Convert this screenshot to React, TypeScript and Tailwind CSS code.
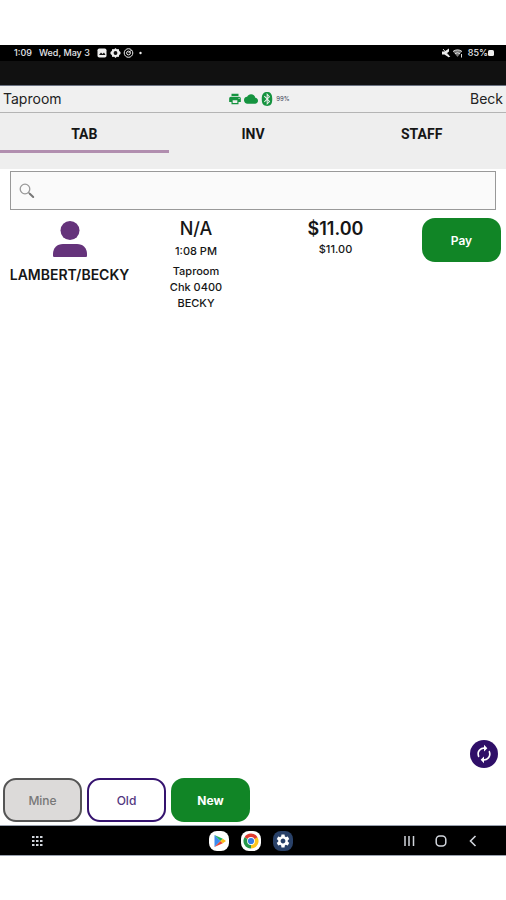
import clsx from "clsx";
import { useState } from "react";
import { FaBluetooth } from "react-icons/fa";
import { MdAutorenew, MdCloud, MdPrint, MdSettings } from "react-icons/md";

const tabs = ["TAB", "INV", "STAFF"];

const checks = [
  {
    id: 400,
    customer: "LAMBERT/BECKY",
    table: "N/A",
    time: "1:08 PM",
    area: "Taproom",
    check: "Chk 0400",
    server: "BECKY",
    total: "$11.00",
    due: "$11.00",
  },
];

function PersonIcon() {
  return (
    <svg viewBox="0 0 34 36" className="h-9 w-[34px] fill-[#65337b]" aria-hidden="true">
      <circle cx="17" cy="9.5" r="9.5" />
      <path d="M0 34.500V33c0-6 4-10 10-10h14c6 0 10 4 10 10v1.500c0 1-.5 1.500-1.500 1.500h-31C.5 36 0 35.500 0 34.500z" />
    </svg>
  );
}

function SearchIcon() {
  return (
    <svg viewBox="0 0 16 16" className="size-4 shrink-0" fill="none" aria-hidden="true">
      <circle cx="6" cy="6" r="4.800" stroke="#999" strokeWidth="1.300" />
      <path d="M9.500 9.500l1.500 1.500" stroke="#888" strokeWidth="1.300" />
      <path d="M10.800 10.800l3.400 3.200" stroke="#777" strokeWidth="2" strokeLinecap="round" />
    </svg>
  );
}

function StatusBar() {
  return (
    <div className="flex h-4 shrink-0 items-center justify-between bg-black pr-3 pl-3.5 text-[9px] font-medium text-gray-200">
      <div className="flex items-center gap-[7px]">
        <span>1:09</span>
        <span>Wed, May 3</span>
        <svg viewBox="0 0 46 10" className="h-2.5 w-[46px]" aria-hidden="true">
          <rect x="0.500" y="0.500" width="9" height="9" rx="1.800" fill="#eee" />
          <path d="M2 7l2-2.500 1.500 1.500L7 4.500 8.500 7z" fill="#111" />
          <path
            d="M18.500 0l1.300 1.200 1.900-.2.500 1.900L23.500 4v2l-1.300 1.100-.5 1.900-1.900-.2-1.300 1.200-1.300-1.200-1.900.2-.5-1.900L13.500 6V4l1.300-1.100.5-1.900 1.900.2z"
            fill="#eee"
          />
          <circle cx="18.500" cy="5" r="1.900" fill="#111" />
          <circle cx="31.500" cy="5" r="4.300" fill="none" stroke="#eee" />
          <circle cx="31.500" cy="5" r="1.900" fill="none" stroke="#eee" />
          <path d="M31.500 5l3-3" stroke="#eee" />
          <circle cx="43.500" cy="5" r="1.200" fill="#eee" />
        </svg>
      </div>
      <div className="flex items-center gap-1">
        <svg viewBox="0 0 22 10" className="h-2.5 w-[22px]" aria-hidden="true">
          <path d="M0 3.500h2.500L7 0.500v3L4.500 5.500 7 7.500v2L2.500 6.500H0z" fill="#eee" />
          <path d="M1 1l7 8" stroke="#eee" strokeWidth="0.900" />
          <path d="M11 3.500a7 7 0 0 1 9 0L15.500 9z" fill="#777" />
          <path d="M11 3.500a7 7 0 0 1 9 0M13 5.700a4 4 0 0 1 5 0" fill="none" stroke="#ddd" />
          <path d="M19.500 6v3.500" stroke="#ddd" />
        </svg>
        <span className="flex items-center">
          85%
          <svg viewBox="0 0 6 8" className="h-2 w-1.5" aria-hidden="true">
            <rect y="1" width="6" height="6" rx="1.500" fill="#eee" />
          </svg>
        </span>
      </div>
    </div>
  );
}

function Header() {
  return (
    <header className="grid h-7 shrink-0 grid-cols-3 items-center border-t border-b border-t-gray-500 border-b-[#b4b4b4] bg-[#f0f0f0] px-[3px] text-sm text-[#222]">
      <span>Taproom</span>
      <div className="flex items-center justify-center gap-0.5 pl-3 text-[#15933f]">
        <MdPrint className="size-[14px]" />
        <MdCloud className="size-[14px]" />
        <FaBluetooth className="size-[14px]" />
        <span className="text-[6px] text-gray-700">99%</span>
      </div>
      <span className="text-right">Beck</span>
    </header>
  );
}

function Play() {
  return (
    <svg viewBox="0 0 20 20" className="size-5" aria-hidden="true">
      <rect width="20" height="20" rx="8" fill="#fff" />
      <path d="M5.500 4v12l6-6z" fill="#3b8cf0" />
      <path d="M5.500 4l6 6 2.300-2.200z" fill="#20b15a" />
      <path d="M5.500 16l6-6 2.300 2.200z" fill="#e94235" />
      <path d="M13.800 7.800L11.500 10l2.300 2.200L17 10z" fill="#f9bc15" />
    </svg>
  );
}

function Chrome() {
  return (
    <svg viewBox="0 0 20 20" className="size-5" aria-hidden="true">
      <rect width="20" height="20" rx="8" fill="#fff" />
      <path d="M10 10L3.500 6.250a7.500 7.500 0 0 1 13 0z" fill="#df3b30" />
      <path d="M10 10l6.500-3.750A7.500 7.500 0 0 1 10 17.500z" fill="#fbc51d" />
      <path d="M10 10v7.500A7.500 7.500 0 0 1 3.500 6.250z" fill="#26984b" />
      <path d="M10 6.250h6.500L10 10z" fill="#df3b30" />
      <circle cx="10" cy="10" r="3.900" fill="#fff" />
      <circle cx="10" cy="10" r="3.100" fill="#347ce4" />
    </svg>
  );
}

function NavBar() {
  return (
    <nav className="grid h-[31px] shrink-0 grid-cols-3 items-center border-t border-b border-gray-400 bg-black text-gray-300">
      <button type="button" aria-label="All apps" className="ml-[31px] w-3">
        <svg viewBox="0 0 12 12" className="size-3" fill="currentColor" aria-hidden="true">
          {[1, 5, 9].map((x) =>
            [2, 6, 10].map((y) => <rect key={`${x}-${y}`} x={x} y={y - 1} width="2.500" height="2" />),
          )}
        </svg>
      </button>
      <div className="flex justify-center gap-3 pr-1">
        <button type="button" aria-label="Play Store">
          <Play />
        </button>
        <button type="button" aria-label="Chrome">
          <Chrome />
        </button>
        <button
          type="button"
          aria-label="Settings"
          className="flex size-5 items-center justify-center rounded-lg bg-[#294168]"
        >
          <MdSettings className="size-4 text-white" />
        </button>
      </div>
      <div className="flex justify-end gap-5 pr-[27px]">
        <button type="button" aria-label="Recents">
          <svg viewBox="0 0 12 12" className="size-3" stroke="currentColor" strokeWidth="1.500" aria-hidden="true">
            <path d="M2 1v10M6 1v10M10.500 1v10" />
          </svg>
        </button>
        <button type="button" aria-label="Home">
          <svg viewBox="0 0 12 12" className="size-3" fill="none" stroke="currentColor" strokeWidth="1.500" aria-hidden="true">
            <rect x="1.200" y="1" width="9.600" height="10" rx="3.500" />
          </svg>
        </button>
        <button type="button" aria-label="Back">
          <svg viewBox="0 0 12 12" className="size-3" fill="none" stroke="currentColor" strokeWidth="1.600" aria-hidden="true">
            <path d="M8.500 1l-5 5 5 5" />
          </svg>
        </button>
      </div>
    </nav>
  );
}

const actionStyle = "h-11 w-[79px] rounded-[13px] pt-0.5 text-xs";

export default function App() {
  const [active, setActive] = useState("TAB");
  const [query, setQuery] = useState("");
  const visible = checks.filter((c) => c.customer.toLowerCase().includes(query.toLowerCase()));

  return (
    <div className="flex min-h-screen flex-col bg-white pt-[45px] pb-11 font-['Inter','Roboto',sans-serif] text-[#161616]">
      <StatusBar />
      <div className="h-6 shrink-0 bg-[#111]" />
      <Header />
      <div className="grid h-14 shrink-0 grid-cols-3 items-start bg-[#eee]">
        {tabs.map((tab) => (
          <button
            key={tab}
            type="button"
            onClick={() => setActive(tab)}
            className={clsx(
              "h-10 border-b-3 pt-1 font-['Roboto',sans-serif] text-sm font-bold",
              active === tab ? "border-[#b18eaf]" : "border-transparent",
            )}
          >
            {tab}
          </button>
        ))}
      </div>
      <main className="flex flex-1 flex-col">
        <label className="mx-2.5 mt-0.5 flex h-[39px] items-center gap-2 border border-[#999] bg-[#fafafa] px-2">
          <SearchIcon />
          <input
            type="text"
            aria-label="Search"
            value={query}
            onChange={(e) => setQuery(e.target.value)}
            className="min-w-0 flex-1 text-sm outline-none"
          />
        </label>
        <ul>
          {visible.map((c) => (
            <li key={c.id} className="flex items-start pt-2 pr-[5px] text-center">
              <div className="flex flex-[139] flex-col items-center gap-2 pt-[3px]">
                <PersonIcon />
                <span className="text-sm font-semibold">{c.customer}</span>
              </div>
              <div className="flex flex-[114] flex-col items-center pt-px text-[11px] leading-4 font-medium">
                <span className="text-lg leading-5">{c.table}</span>
                <span className="mt-1">{c.time}</span>
                <span className="mt-1">{c.area}</span>
                <span>{c.check}</span>
                <span>{c.server}</span>
              </div>
              <div className="flex flex-[165] flex-col items-center pt-px pr-1">
                <span className="text-lg leading-5 font-semibold">{c.total}</span>
                <span className="text-[11px] leading-5 font-medium">{c.due}</span>
              </div>
              <button type="button" className={clsx(actionStyle, "bg-[#118526] font-semibold text-white")}>
                Pay
              </button>
            </li>
          ))}
        </ul>
        <div className="mt-auto flex justify-end pr-2 pb-2.5">
          <button
            type="button"
            aria-label="Refresh"
            className="flex size-7 items-center justify-center rounded-full bg-[#2f0f68]"
          >
            <MdAutorenew className="size-5 text-white" />
          </button>
        </div>
        <div className="flex gap-[5px] px-[3px] pb-[3px]">
          <button
            type="button"
            className={clsx(actionStyle, "border-2 border-[#555] bg-[#dcdad9] font-medium text-[#777]")}
          >
            Mine
          </button>
          <button
            type="button"
            className={clsx(actionStyle, "border-2 border-[#35136f] bg-white font-medium text-[#533780]")}
          >
            Old
          </button>
          <button type="button" className={clsx(actionStyle, "bg-[#118526] font-bold text-white")}>
            New
          </button>
        </div>
      </main>
      <NavBar />
    </div>
  );
}
